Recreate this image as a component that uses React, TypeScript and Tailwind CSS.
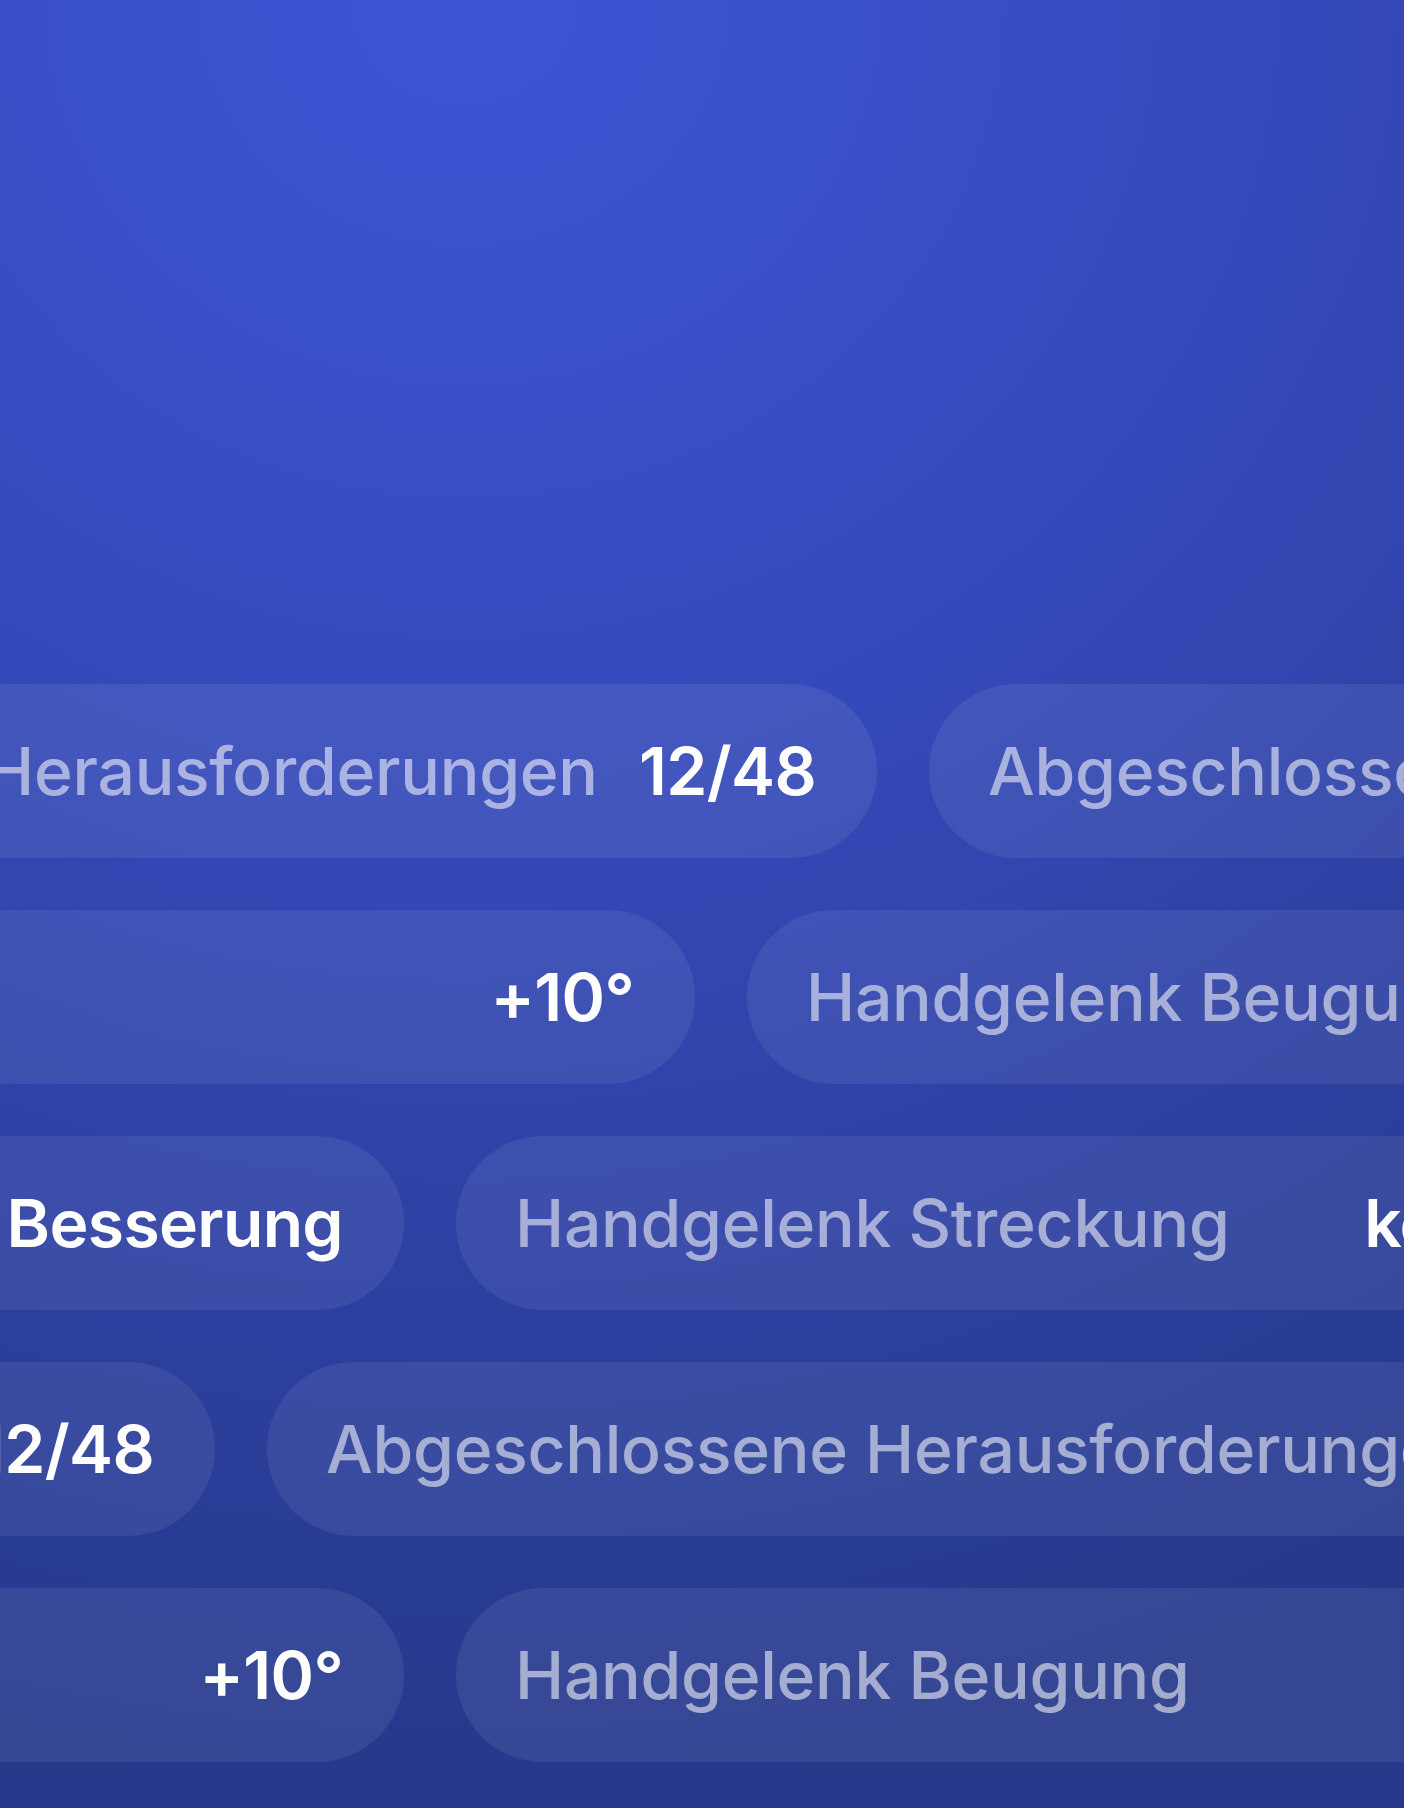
import React from "react";

type PillData = { label: string; value: string };

const ABG: PillData = { label: "Abgeschlossene Herausforderungen", value: "12/48" };
const BEU: PillData = { label: "Handgelenk Beugung", value: "+10°" };
const STR: PillData = { label: "Handgelenk Streckung", value: "keine Besserung" };

function Pill({ label, value }: PillData) {
  return (
    <div className="flex-none w-[1490px] h-[174px] rounded-full bg-white/[0.07] flex items-center justify-between pl-[59px] pr-[61px]">
      <span className="text-[66px] leading-none font-medium tracking-[-0.004em] text-white/55 whitespace-nowrap">
        {label}
      </span>
      <span className="text-[66px] leading-none font-semibold tracking-[-0.01em] text-white whitespace-nowrap">
        {value}
      </span>
    </div>
  );
}

export default function App() {
  return (
    <div
      className="w-[1404px] h-[1808px] overflow-hidden flex flex-col gap-[52px] pt-[684px] bg-[radial-gradient(140%_100%_at_33%_0%,#3b55d5_0%,#3449b8_45%,#2c40a0_72%,#26388a_100%)]"
      style={{ fontFamily: "Inter, 'Noto Sans', sans-serif" }}
    >
      <div className="flex gap-[52px] ml-[-613px]">
        <Pill {...ABG} />
        <Pill {...ABG} />
      </div>
      <div className="flex gap-[52px] ml-[-795px]">
        <Pill {...BEU} />
        <Pill {...BEU} />
      </div>
      <div className="flex gap-[52px] ml-[-1086px]">
        <Pill {...STR} />
        <Pill {...STR} />
      </div>
      <div className="flex gap-[52px] ml-[-1275px]">
        <Pill {...ABG} />
        <Pill {...ABG} />
      </div>
      <div className="flex gap-[52px] ml-[-1086px]">
        <Pill {...BEU} />
        <Pill {...BEU} />
      </div>
    </div>
  );
}
